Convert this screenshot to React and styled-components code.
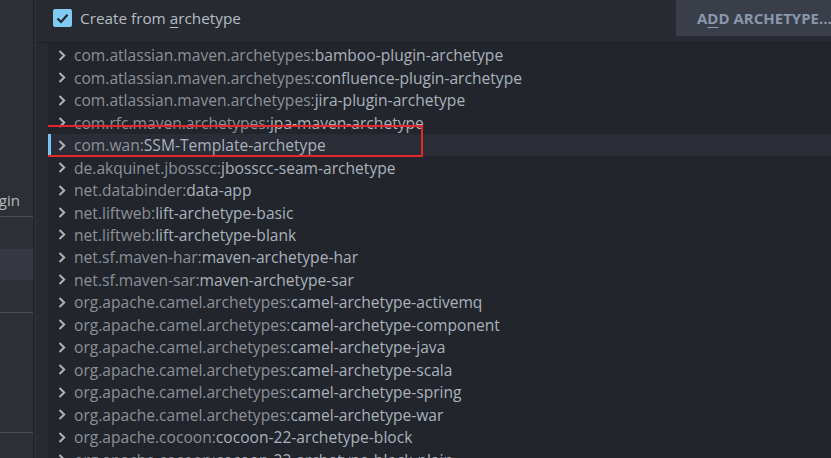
import React from 'react';
import styled, { createGlobalStyle } from 'styled-components';

const GlobalStyle = createGlobalStyle`
    html, body {
        margin: 0;
        padding: 0;
        background: #272a31;
        overflow: hidden;
    }
    body {
        font-family: "Open Sans", "Noto Sans", sans-serif;
    }
`;

const archetypes = [
    ['com.atlassian.maven.archetypes', 'bamboo-plugin-archetype'],
    ['com.atlassian.maven.archetypes', 'confluence-plugin-archetype'],
    ['com.atlassian.maven.archetypes', 'jira-plugin-archetype'],
    ['com.rfc.maven.archetypes', 'jpa-maven-archetype'],
    ['com.wan', 'SSM-Template-archetype'],
    ['de.akquinet.jbosscc', 'jbosscc-seam-archetype'],
    ['net.databinder', 'data-app'],
    ['net.liftweb', 'lift-archetype-basic'],
    ['net.liftweb', 'lift-archetype-blank'],
    ['net.sf.maven-har', 'maven-archetype-har'],
    ['net.sf.maven-sar', 'maven-archetype-sar'],
    ['org.apache.camel.archetypes', 'camel-archetype-activemq'],
    ['org.apache.camel.archetypes', 'camel-archetype-component'],
    ['org.apache.camel.archetypes', 'camel-archetype-java'],
    ['org.apache.camel.archetypes', 'camel-archetype-scala'],
    ['org.apache.camel.archetypes', 'camel-archetype-spring'],
    ['org.apache.camel.archetypes', 'camel-archetype-war'],
    ['org.apache.cocoon', 'cocoon-22-archetype-block'],
    ['org.apache.cocoon', 'cocoon-22-archetype-block-plain'],
];

const SELECTED = 4;

const Chevron = () => (
    <svg width="8" height="11" viewBox="0 0 8 11">
        <path d="M1.5 1 L6.2 5.5 L1.5 10" fill="none" stroke="#aeb3bb" strokeWidth="2" />
    </svg>
);

const Check = () => (
    <svg width="13" height="11" viewBox="0 0 13 11">
        <path d="M1.5 5.5 L5 9 L11.5 1.8" fill="none" stroke="#1e2630" strokeWidth="2.2" />
    </svg>
);

const App = () => {
    return (
        <Page>
            <GlobalStyle />
            <Sidebar>
                <SideLabel>
                    <span>Plugin</span>
                </SideLabel>
                <SideDivider />
                <SideItem $active />
                <SideDivider />
                <SideItem />
                <SideDivider />
            </Sidebar>
            <Gutter />
            <Main>
                <TopBar>
                    <CheckLabel>
                        <CheckBox>
                            <Check />
                        </CheckBox>
                        <span>Create from <u>a</u>rchetype</span>
                    </CheckLabel>
                    <AddButton>
                        A<u>D</u>D ARCHETYPE...
                    </AddButton>
                </TopBar>
                <List>
                    {archetypes.map(([group, artifact], index) => (
                        <Row key={index} $selected={index === SELECTED}>
                            <Chevron />
                            <RowText>
                                <Group>{group}:</Group>
                                <Artifact>{artifact}</Artifact>
                            </RowText>
                        </Row>
                    ))}
                    <Highlight />
                </List>
            </Main>
        </Page>
    );
};

const Page = styled.div`
    display: flex;
    width: 831px;
    height: 458px;
    overflow: hidden;
    background: #272a31;
`;

const Sidebar = styled.div`
    width: 33px;
    flex-shrink: 0;
    background: #2c2f36;
    display: flex;
    flex-direction: column;
    padding-top: 188px;
`;

const SideLabel = styled.div`
    display: flex;
    justify-content: flex-end;
    overflow: hidden;
    white-space: nowrap;
    height: 24px;
    padding-right: 13px;
    font-size: 15px;
    line-height: 24px;
    color: #b6bac1;
`;

const SideDivider = styled.div`
    height: 1px;
    margin-top: 4px;
    background: #4b4e56;
`;

const SideItem = styled.div`
    height: ${(p) => (p.$active ? '31px' : '95px')};
    margin-top: ${(p) => (p.$active ? '32px' : '0')};
    margin-bottom: ${(p) => (p.$active ? '28px' : '20px')};
    background: ${(p) => (p.$active ? '#363941' : 'transparent')};
`;

const Gutter = styled.div`
    width: 2px;
    flex-shrink: 0;
    background: #24272d;
    border-right: 1px solid #30333a;
`;

const Main = styled.div`
    flex: 1;
    display: flex;
    flex-direction: column;
    min-width: 0;
    min-height: 0;
`;

const TopBar = styled.div`
    height: 42px;
    flex-shrink: 0;
    display: flex;
    align-items: flex-start;
    justify-content: space-between;
    border-bottom: 1px solid #1d1f24;
`;

const CheckLabel = styled.label`
    display: flex;
    align-items: center;
    gap: 8px;
    margin: 8px 0 0 17px;
    font-size: 15.3px;
    color: #b8bcc3;

    u {
        text-decoration-thickness: 1px;
        text-underline-offset: 3px;
    }
`;

const CheckBox = styled.span`
    width: 19px;
    height: 18px;
    border-radius: 2px;
    background: #7fcbf3;
    display: flex;
    align-items: center;
    justify-content: center;
`;

const AddButton = styled.div`
    width: 155px;
    height: 36px;
    box-sizing: border-box;
    padding-left: 21px;
    background: #393e49;
    color: #8a98ad;
    font-weight: 700;
    font-size: 15px;
    line-height: 36px;
    white-space: nowrap;
    overflow: hidden;

    u {
        text-decoration-thickness: 1px;
        text-underline-offset: 3px;
    }
`;

const List = styled.div`
    position: relative;
    flex: 1;
    min-height: 0;
    overflow: hidden;
    margin-left: 12px;
    padding-top: 1px;
    background: #22252b;
`;

const Row = styled.div`
    height: 22.47px;
    display: flex;
    align-items: center;
    gap: 8px;
    padding-left: 7px;
    box-sizing: border-box;
    background: ${(p) => (p.$selected ? '#2a2d35' : 'transparent')};
    border-left: 3px solid ${(p) => (p.$selected ? '#78c6ef' : 'transparent')};
    white-space: nowrap;
`;

const RowText = styled.span`
    font-size: 15.6px;
`;

const Group = styled.span`
    color: #8d9199;
`;

const Artifact = styled.span`
    color: #aab2bd;
`;

const Highlight = styled.div`
    position: absolute;
    left: -4px;
    top: 82px;
    width: 379px;
    height: 32px;
    box-sizing: border-box;
    border: 2px solid #e3262b;
    pointer-events: none;
`;

export default App;
